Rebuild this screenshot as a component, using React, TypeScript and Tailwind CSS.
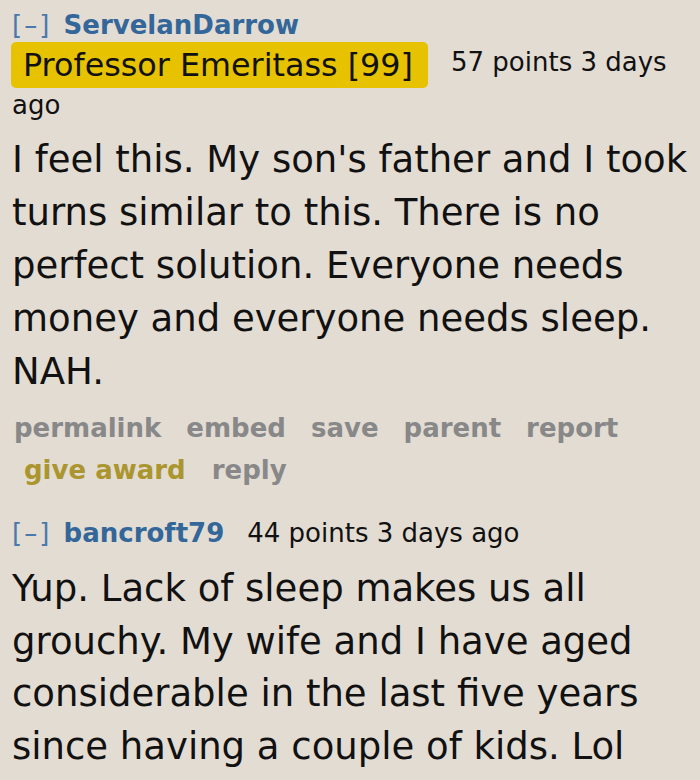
import React from 'react';

const FONT = { fontFamily: '"DejaVu Sans", Verdana, sans-serif' };

function Buttons() {
  const row1 = ['permalink', 'embed', 'save', 'parent', 'report'];
  return (
    <div className="font-bold text-[26px] leading-[42px] text-[#888888]">
      <div className="flex gap-[25px] pl-[2px]">
        {row1.map((b) => (
          <span key={b}>{b}</span>
        ))}
      </div>
      <div className="flex gap-[26px] pl-[12px]">
        <span className="text-[#ab952f]">give award</span>
        <span>reply</span>
      </div>
    </div>
  );
}

function Collapse() {
  return <span className="text-[#4b79ad] tracking-[2px] mr-[4px]">[–]</span>;
}

export default function App() {
  return (
    <div style={FONT} className="w-[700px] h-[780px] overflow-hidden bg-[#e3dcd3] text-[#111] pl-[12px]">
      {/* first comment */}
      <div className="pt-[8px] text-[26px] leading-[34px] whitespace-nowrap">
        <Collapse />{' '}
        <span className="font-bold text-[#336699]">ServelanDarrow</span>
      </div>
      <div className="flex items-center h-[46px] whitespace-nowrap">
        <span className="-ml-[1px] h-[46px] flex items-center bg-[#e6c200] rounded-[5px] pl-[12px] pr-[15px] text-[31.8px] text-[#111]">
          Professor Emeritass [99]
        </span>
        <span className="ml-[23px] -mt-[6px] text-[26px]">57 points 3 days</span>
      </div>
      <div className="text-[26px] leading-[34px]">ago</div>
      <p className="mt-[11px] text-[37px] leading-[53px] pr-[2px]">
        I feel this. My son's father and I took turns similar to this. There is no perfect solution. Everyone needs money and everyone needs sleep. NAH.
      </p>
      <div className="mt-[9px]">
        <Buttons />
      </div>

      {/* second comment */}
      <div className="mt-[22px] text-[26px] leading-[40px] whitespace-nowrap">
        <Collapse />{' '}
        <span className="font-bold text-[#336699]">bancroft79</span>
        <span className="ml-[23px]">44 points 3 days ago</span>
      </div>
      <p className="mt-[10px] text-[37px] leading-[52.5px] pr-[2px]">
        Yup. Lack of sleep makes us all grouchy. My wife and I have aged considerable in the last five years since having a couple of kids. Lol
      </p>
    </div>
  );
}
